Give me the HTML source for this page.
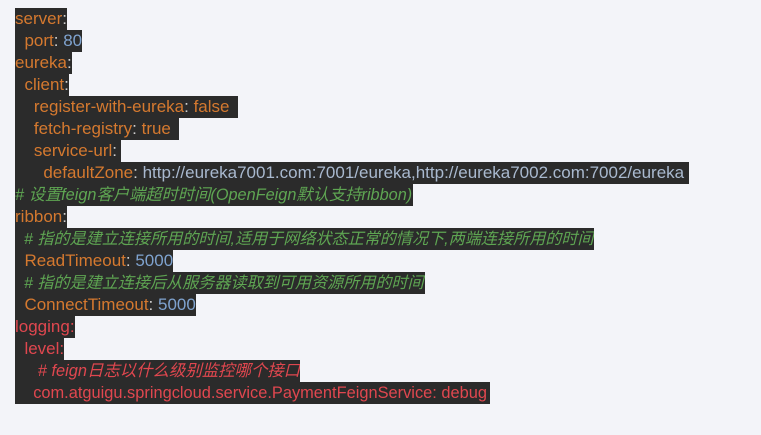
<!DOCTYPE html>
<html><head><meta charset="utf-8"><style>
body{margin:0;background:#f3f4f9;width:761px;height:435px;overflow:hidden;font-family:"Liberation Sans","Noto Sans CJK SC",sans-serif;font-size:17px}
.l{position:absolute;left:15px;height:22px;line-height:22px;background:#2b2b2b;white-space:pre;overflow:hidden}
.k{color:#d5792f}.c{color:#d0d0d0}.n{color:#7fa3cf}.u{color:#a9b9cf}.g{color:#5ea552;font-style:italic}.r{color:#e0474f}.rc{color:#e0474f;font-style:italic}
</style></head><body>
<div class="l" style="top:8px"><span class="k">server</span><span class="c">:</span></div>
<div class="l" style="top:30px"><span class="k">  port</span><span class="c">: </span><span class="n">80</span></div>
<div class="l" style="top:52px"><span class="k">eureka</span><span class="c">:</span></div>
<div class="l" style="top:74px"><span class="k">  client</span><span class="c">:</span></div>
<div class="l" style="top:96px;min-width:223px"><span class="k">    register-with-eureka</span><span class="c">: </span><span class="k">false</span></div>
<div class="l" style="top:118px;min-width:164px"><span class="k">    fetch-registry</span><span class="c">: </span><span class="k">true</span></div>
<div class="l" style="top:140px;min-width:106px"><span class="k">    service-url</span><span class="c">:</span></div>
<div class="l" style="top:162px;min-width:674px"><span class="k">      defaultZone</span><span class="c">: </span><span class="u">http://eureka7001.com:7001/eureka,http://eureka7002.com:7002/eureka</span></div>
<div class="l" style="top:184px;min-width:398px;font-size:16.3px"><span class="g"># 设置feign客户端超时时间(OpenFeign默认支持ribbon)</span></div>
<div class="l" style="top:206px"><span class="k">ribbon</span><span class="c">:</span></div>
<div class="l" style="top:228px;min-width:578px;font-size:16.1px"><span class="g">  # 指的是建立连接所用的时间,适用于网络状态正常的情况下,两端连接所用的时间</span></div>
<div class="l" style="top:250px;min-width:155px"><span class="k">  ReadTimeout</span><span class="c">: </span><span class="n">5000</span></div>
<div class="l" style="top:272px;min-width:410px;font-size:16.1px"><span class="g">  # 指的是建立连接后从服务器读取到可用资源所用的时间</span></div>
<div class="l" style="top:294px;min-width:180px"><span class="k">  ConnectTimeout</span><span class="c">: </span><span class="n">5000</span></div>
<div class="l" style="top:316px;min-width:59px"><span class="r">logging:</span></div>
<div class="l" style="top:338px"><span class="r">  level:</span></div>
<div class="l" style="top:360px;min-width:282px;font-size:16.4px"><span class="rc">     # feign日志以什么级别监控哪个接口</span></div>
<div class="l" style="top:382px;min-width:475px;font-size:16.4px"><span class="r">    com.atguigu.springcloud.service.PaymentFeignService: debug</span></div>
</body></html>
